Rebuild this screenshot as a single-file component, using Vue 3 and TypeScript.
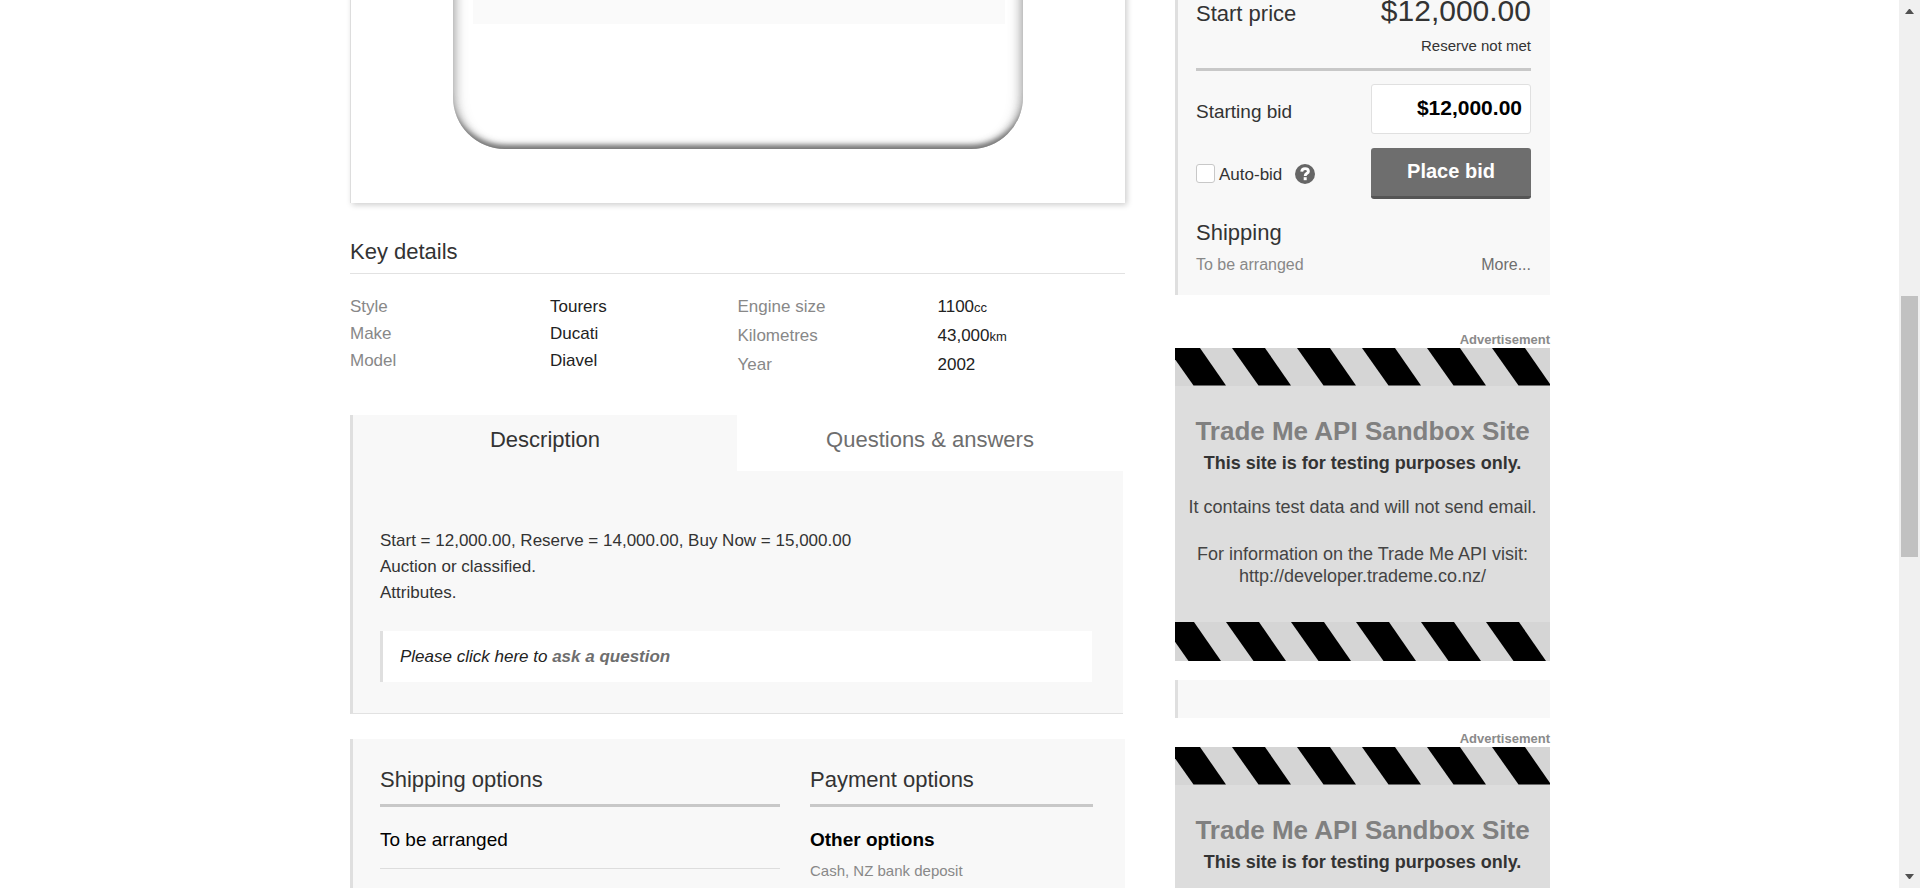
<script setup lang="ts">
import { ref } from 'vue'

interface Detail {
  label: string
  value: string
  unit?: string
}

const styleDetails: Detail[] = [
  { label: 'Style', value: 'Tourers' },
  { label: 'Make', value: 'Ducati' },
  { label: 'Model', value: 'Diavel' },
]

const engineDetails: Detail[] = [
  { label: 'Engine size', value: '1100', unit: 'cc' },
  { label: 'Kilometres', value: '43,000', unit: 'km' },
  { label: 'Year', value: '2002' },
]

const stripes = [0, 1, 2, 3, 4, 5]
const adverts = [0, 1]
const bid = ref<string>('$12,000.00')
const autoBid = ref<boolean>(false)
const activeTab = ref<'description' | 'questions'>('description')
</script>

<template>
  <div class="page">
    <main class="content">
      <div class="columns">
        <div class="left">
          <div class="gallery">
            <div class="device"><div class="screen"></div></div>
          </div>

          <section class="details">
            <h2>Key details</h2>
            <div class="detail-grid">
              <dl class="tight">
                <div v-for="d in styleDetails" :key="d.label">
                  <dt>{{ d.label }}</dt>
                  <dd>{{ d.value }}</dd>
                </div>
              </dl>
              <dl>
                <div v-for="d in engineDetails" :key="d.label">
                  <dt>{{ d.label }}</dt>
                  <dd>{{ d.value }}<small v-if="d.unit">{{ d.unit }}</small></dd>
                </div>
              </dl>
            </div>
          </section>

          <section class="tabbed">
            <div class="tabs" role="tablist">
              <button type="button" role="tab" :class="{ active: activeTab === 'description' }"
                :aria-selected="activeTab === 'description'" @click="activeTab = 'description'">Description</button>
              <button type="button" role="tab" :class="{ active: activeTab === 'questions' }"
                :aria-selected="activeTab === 'questions'" @click="activeTab = 'questions'">Questions &amp; answers</button>
            </div>
            <div class="tab-body">
              <p>Start = 12,000.00, Reserve = 14,000.00, Buy Now = 15,000.00<br>Auction or classified.<br>Attributes.</p>
              <p class="ask">Please click here to <a href="#ask">ask a question</a></p>
            </div>
          </section>

          <section class="options">
            <div>
              <h2>Shipping options</h2>
              <p class="ship-row">To be arranged</p>
            </div>
            <div>
              <h2>Payment options</h2>
              <h3>Other options</h3>
              <p class="note">Cash, NZ bank deposit</p>
            </div>
          </section>
        </div>

        <aside class="right">
          <form class="bidbox" @submit.prevent>
            <div class="price-row">
              <span class="price-label">Start price</span>
              <span class="price">$12,000.00</span>
            </div>
            <div class="reserve">Reserve not met</div>
            <div class="bid-row">
              <label for="bid">Starting bid</label>
              <input id="bid" v-model="bid" class="bid-input" type="text">
            </div>
            <div class="action-row">
              <input id="auto" v-model="autoBid" class="check" type="checkbox">
              <label for="auto">Auto-bid</label>
              <button class="help" type="button" aria-label="Help">
                <svg viewBox="0 0 20 20" width="20" height="20" aria-hidden="true">
                  <circle cx="10" cy="10" r="10" fill="#666" />
                  <path d="M6.7 7.600C6.900 5.500 8.300 4.600 10.100 4.600C12 4.600 13.400 5.700 13.400 7.400C13.400 9.400 10.200 9.300 10.200 11.900" fill="none" stroke="#fff" stroke-width="2.900" />
                  <rect x="8.700" y="13.200" width="3" height="3" fill="#fff" />
                </svg>
              </button>
              <button class="place" type="submit">Place bid</button>
            </div>
            <h2>Shipping</h2>
            <div class="shipping-row">
              <span>To be arranged</span>
              <a href="#shipping">More...</a>
            </div>
          </form>

          <template v-for="n in adverts" :key="n">
            <div v-if="n === 1" class="spacer"></div>
            <div class="advert">
              <div class="advert-label">Advertisement</div>
              <div class="advert-card">
                <svg class="strip" viewBox="0 0 375 38" height="38" aria-hidden="true">
                  <polygon v-for="i in stripes" :key="i" points="-8,0 25,0 51,37.500 18.500,37.500" :transform="`translate(${i * 65} 0)`" />
                </svg>
                <div class="advert-copy">
                  <strong class="advert-title">Trade Me API Sandbox Site</strong>
                  <strong class="advert-sub">This site is for testing purposes only.</strong>
                  <p>It contains test data and will not send email.</p>
                  <p class="visit">For information on the Trade Me API visit:<br>http://developer.trademe.co.nz/</p>
                </div>
                <svg class="strip" viewBox="0 0 375 39" height="39" aria-hidden="true">
                  <polygon v-for="i in stripes" :key="i" points="-14,0 19,0 46,39 13.500,39" :transform="`translate(${i * 65} 0)`" />
                </svg>
              </div>
            </div>
          </template>
        </aside>
      </div>
    </main>

    <div class="scrollbar" aria-hidden="true">
      <svg viewBox="0 0 21 21" width="21" height="21"><path d="M6 14h9l-4-5h-1z" fill="#505050" /></svg>
      <div class="above"></div>
      <div class="thumb"></div>
      <div class="below"></div>
      <svg viewBox="0 0 21 21" width="21" height="21"><path d="M6 7h9l-4 5h-1z" fill="#505050" /></svg>
    </div>
  </div>
</template>

<style>
body {
  margin: 0;
  background: #fff;
}
</style>

<style scoped>
.page {
  display: flex;
  height: 100vh;
  overflow: hidden;
  color: #333;
  font: 17px/26px "Liberation Sans", Arial, sans-serif;
}
.page *, .page *::before { box-sizing: border-box; }
h2, h3, p, dl, dd { margin: 0; }
h2 { font-size: 22px; line-height: 30px; font-weight: 400; }
button, input { font-family: inherit; margin: 0; }
a { color: #6e6e6e; text-decoration: none; }

.content { flex: 1; min-width: 0; padding-left: 1px; }
.columns {
  display: grid;
  grid-template-columns: 775fr 375fr;
  column-gap: 50px;
  align-items: start;
  max-width: 1200px;
  margin: 0 auto;
}

.gallery {
  margin-top: -20px;
  padding-bottom: 54px;
  border-left: 1px solid #ddd;
  background: #fff;
  box-shadow: 2px 2px 6px rgba(0, 0, 0, .2);
}
.device {
  width: 570px;
  height: 169px;
  margin: 0 auto;
  padding: 0 18px 0 20px;
  border-radius: 0 0 52px 52px;
  box-shadow: inset 0 -7px 5px -4px #777, inset 0 -8px 8px -5px #999, inset 6px 0 9px -4px #bbb, inset -6px 0 9px -4px #bbb, inset 10px 0 14px -6px #ddd, inset -10px 0 14px -6px #ddd;
}
.screen { height: 44px; background: rgba(0, 0, 0, .02); }

.details h2 { margin-top: 34px; padding-bottom: 6px; border-bottom: 1px solid #e2e2e2; }
.detail-grid { display: grid; grid-template-columns: 1fr 1fr; padding-top: 18px; }
.detail-grid dl > div { display: grid; grid-template-columns: 200px 1fr; line-height: 29px; }
.detail-grid dl.tight { padding-top: 1px; }
.detail-grid dl.tight > div { line-height: 27px; }
dt { color: #888; }
dd { color: #222; }
small { font-size: 13px; line-height: 13px; }

.tabbed {
  margin: 36px 2px 0 0;
  border-left: 3px solid #dfdfdf;
  border-bottom: 1px solid #e2e2e2;
  background: #f8f8f8;
}
.tabs { display: grid; grid-template-columns: 384fr 386fr; }
.tabs button {
  padding: 0 0 6px;
  border: 0;
  background: #fff;
  color: #6e6e6e;
  font-size: 22px;
  line-height: 50px;
}
.tabs .active { background: #f8f8f8; color: #333; }
.tab-body { padding: 57px 31px 31px 27px; }
.ask {
  margin-top: 25px;
  padding: 13px 17px;
  border-left: 3px solid #dfdfdf;
  background: #fff;
  color: #222;
  font-style: italic;
  line-height: 25px;
}
.ask a { font-weight: 700; }

.options {
  display: grid;
  grid-template-columns: 400fr 283fr;
  column-gap: 30px;
  margin-top: 25px;
  padding: 26px 32px 60px 27px;
  border-left: 3px solid #dfdfdf;
  background: #f8f8f8;
}
.options h2 { padding-bottom: 9px; border-bottom: 3px solid #c8c8c8; }
.ship-row, h3 { padding-top: 19px; color: #000; font-size: 19px; line-height: 28px; }
.ship-row { padding-bottom: 14px; border-bottom: 1px solid #ddd; }
.note { margin-top: 6px; color: #888; font-size: 15px; line-height: 22px; }

.bidbox { padding: 0 19px 19px 18px; border-left: 3px solid #dfdfdf; background: #f8f8f8; }
.price-row { display: flex; justify-content: space-between; align-items: baseline; line-height: 22px; }
.price-label { font-size: 22px; }
.price { font-size: 30px; }
.reserve {
  padding: 10px 0 11px;
  border-bottom: 3px solid #c8c8c8;
  font-size: 15px;
  line-height: 22px;
  text-align: right;
}
.bid-row { display: flex; justify-content: space-between; align-items: center; margin-top: 13px; }
.bid-row label { padding-top: 6px; font-size: 19px; }
.bid-input {
  width: 160px;
  height: 50px;
  padding: 0 8px 2px;
  border: 1px solid #e0e0e0;
  border-radius: 3px;
  background: #fff;
  color: #000;
  font-size: 21px;
  font-weight: 700;
  text-align: right;
}
.action-row { display: flex; align-items: center; margin-top: 14px; }
.action-row label { padding: 2px 13px 0 4px; }
.check {
  appearance: none;
  width: 19px;
  height: 19px;
  border: 1px solid #c8c8c8;
  border-radius: 3px;
  background: #fff;
}
.check:checked { background: #6e6e6e; }
.help { display: flex; padding: 0; border: 0; background: none; }
.place {
  width: 160px;
  height: 51px;
  margin-left: auto;
  padding: 0 0 2px;
  border: 0;
  border-bottom: 3px solid #555;
  border-radius: 3px;
  background: #6e6e6e;
  color: #fff;
  font-size: 20px;
  font-weight: 700;
}
.bidbox h2 { margin-top: 19px; }
.shipping-row { display: flex; justify-content: space-between; margin-top: 6px; color: #888; font-size: 16px; line-height: 22px; }

.advert { margin-top: 37px; }
.advert-label { color: #8a8a8a; font-size: 13px; font-weight: 700; line-height: 16px; text-align: right; }
.advert-card { background: #ddd; text-align: center; color: #444; font-size: 18px; line-height: 22px; }
.strip { display: block; width: 100%; background: #d5d5d5; }
.advert-copy { padding: 28px 0 35px; }
.advert-copy strong { display: block; }
.advert-title { color: #808080; font-size: 26px; line-height: 34px; }
.advert-sub { color: #333; line-height: 30px; }
.advert-copy p { margin-top: 18px; white-space: nowrap; }
.advert-copy .visit { margin-top: 25px; }
.spacer { height: 38px; margin-top: 19px; border-left: 3px solid #dfdfdf; background: #f8f8f8; }
.spacer + .advert { margin-top: 13px; }

.scrollbar { display: flex; flex-direction: column; width: 21px; background: #f0f0f0; }
.scrollbar svg { flex: none; }
.above { flex: 275; }
.thumb { flex: 261; margin: 0 2px; background: #c1c1c1; }
.below { flex: 310; }
</style>
